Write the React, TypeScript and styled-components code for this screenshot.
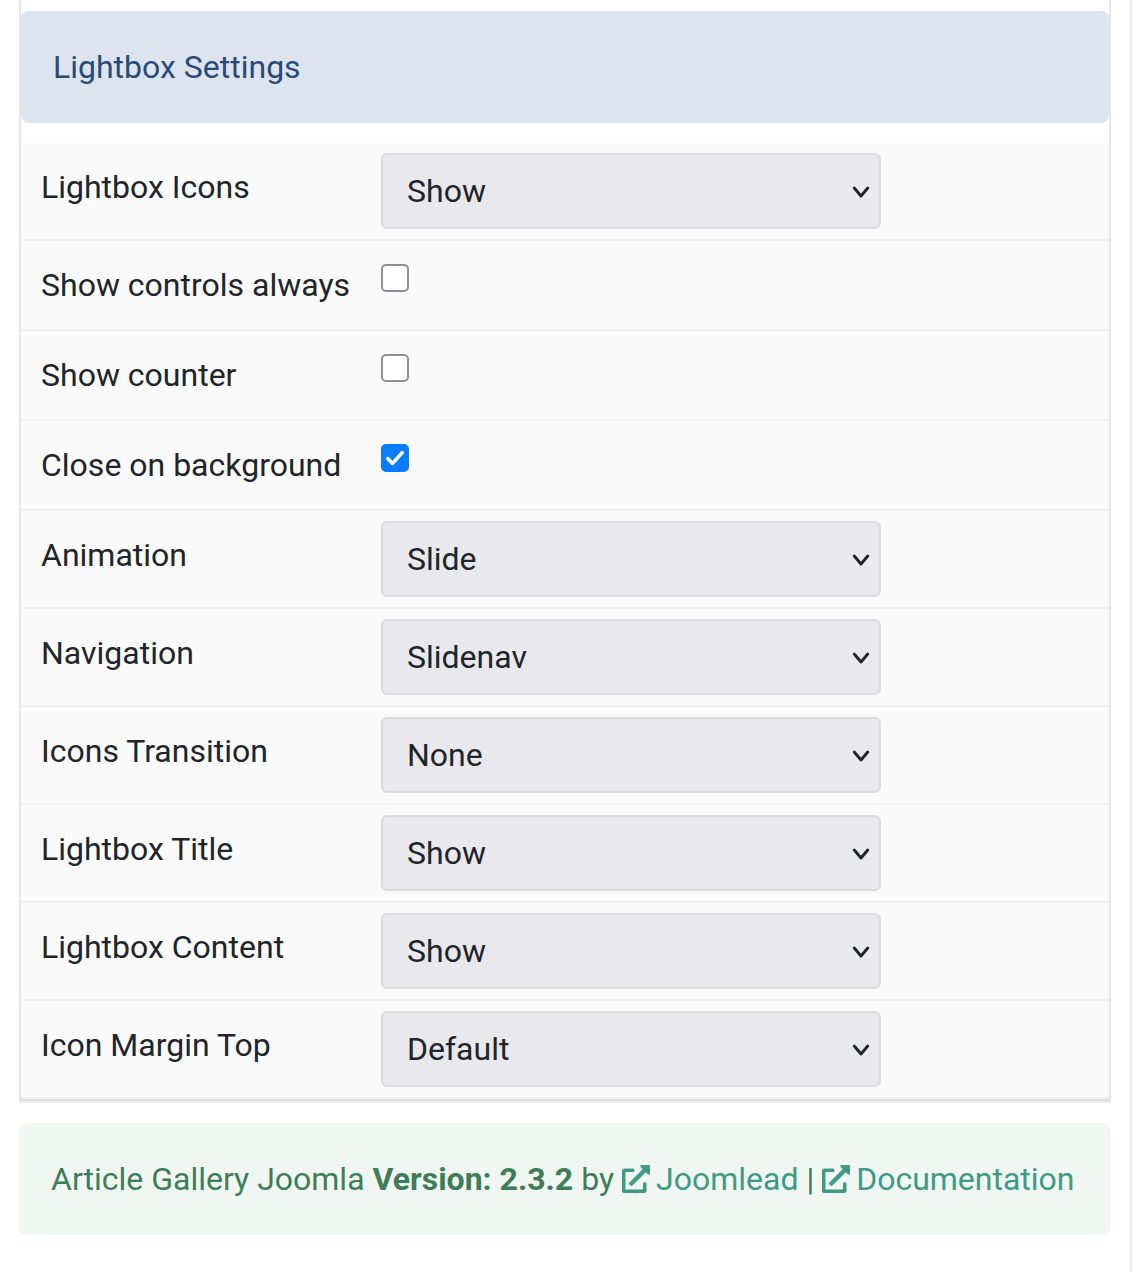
import { FC } from "react";
import styled, { createGlobalStyle } from "styled-components";
import { FaExternalLinkAlt } from "react-icons/fa";

const GlobalStyle = createGlobalStyle`
    html, body {
        margin: 0;
        padding: 0;
        background: #fff;
    }
    body {
        font-family: Roboto, "Liberation Sans", sans-serif;
        font-size: 32px;
        color: #212529;
    }
    * {
        box-sizing: border-box;
    }
`;

const Page = styled.div`
    width: 1132px;
    height: 1272px;
    padding-left: 19px;
    padding-right: 19px;
    border-right: 2px solid #e8e8e8;
    overflow: hidden;
`;

const Panel = styled.section`
    padding-top: 11px;
    border-left: 2px solid #e6e6e6;
    border-right: 2px solid #e6e6e6;
    border-bottom: 2px solid #e0e0e2;
    box-shadow: 0 2px 0 #eeeeee;
`;

const PanelHeader = styled.h3`
    margin: 0 0 20px;
    height: 112px;
    padding: 0 32px;
    display: flex;
    align-items: center;
    background: #dde4f0;
    border-radius: 8px;
    color: #2a4a75;
    font-size: 32px;
    font-weight: 400;
    line-height: 48px;
`;

const Row = styled.div`
    display: flex;
    background: #fafafa;
    border-bottom: 2px solid #eeeeee;
`;

const Label = styled.label`
    flex: 0 0 360px;
    padding: 20px;
    line-height: 48px;
`;

const Field = styled.div`
    padding: 10px 0;
`;

const CheckField = styled.div`
    padding: 23px 0 0;
    height: 88px;
`;

const Select = styled.select`
    display: block;
    width: 500px;
    height: 76px;
    padding: 0 24px;
    appearance: none;
    border: 2px solid #dcdcdf;
    border-radius: 6px;
    background-color: #e8e8ed;
    background-image: url("data:image/svg+xml,%3csvg xmlns='http://www.w3.org/2000/svg' viewBox='0 0 16 12'%3e%3cpath fill='none' stroke='%23212529' stroke-linecap='round' stroke-linejoin='round' stroke-width='2.6' d='M2 2.5l6 7 6-7'/%3e%3c/svg%3e");
    background-repeat: no-repeat;
    background-position: right 9px top 30px;
    background-size: 18px 14px;
    color: #212529;
    font-family: inherit;
    font-size: 32px;
    line-height: 48px;
`;

const CheckBox = styled.span<{ $checked?: boolean }>`
    display: flex;
    align-items: center;
    justify-content: center;
    width: 28px;
    height: 28px;
    border-radius: 5px;
    border: 2px solid ${props => props.$checked ? "#0a7cff" : "#8e8e9e"};
    background: ${props => props.$checked ? "#0a7cff" : "#fff"};
`;

const Footer = styled.footer`
    margin: 22px 0 0;
    height: 112px;
    padding: 0 32px;
    display: flex;
    align-items: center;
    white-space: pre;
    background: #f0f7f3;
    border-radius: 8px;
    color: #3f7d58;
    line-height: 48px;
`;

const Link = styled.a`
    display: inline-flex;
    align-items: center;
    color: #3f9a85;
    text-decoration: none;

    svg {
        width: 28px;
        height: 28px;
        margin-right: 6px;
    }
`;

type RowData = { label: string; value?: string; checked?: boolean };

const rows: RowData[] = [
    { label: "Lightbox Icons", value: "Show" },
    { label: "Show controls always", checked: false },
    { label: "Show counter", checked: false },
    { label: "Close on background", checked: true },
    { label: "Animation", value: "Slide" },
    { label: "Navigation", value: "Slidenav" },
    { label: "Icons Transition", value: "None" },
    { label: "Lightbox Title", value: "Show" },
    { label: "Lightbox Content", value: "Show" },
    { label: "Icon Margin Top", value: "Default" },
];

const App: FC = () => (
    <Page>
        <GlobalStyle />
        <Panel>
            <PanelHeader>Lightbox Settings</PanelHeader>
            {rows.map(row => (
                <Row key={row.label}>
                    <Label>{row.label}</Label>
                    {row.value ? (
                        <Field>
                            <Select defaultValue={row.value}>
                                <option>{row.value}</option>
                            </Select>
                        </Field>
                    ) : (
                        <CheckField>
                            <CheckBox $checked={row.checked}>
                                {row.checked && (
                                    <svg width="24" height="24" viewBox="0 0 20 20">
                                        <path fill="none" stroke="#fff" strokeLinecap="round" strokeLinejoin="round" strokeWidth="3" d="M4 10.5l4 4 8-9" />
                                    </svg>
                                )}
                            </CheckBox>
                        </CheckField>
                    )}
                </Row>
            ))}
        </Panel>
        <Footer>
            Article Gallery Joomla <b>Version: 2.3.2</b> by <Link href="#"><FaExternalLinkAlt />Joomlead</Link> | <Link href="#"><FaExternalLinkAlt />Documentation</Link>
        </Footer>
    </Page>
);

export default App;
